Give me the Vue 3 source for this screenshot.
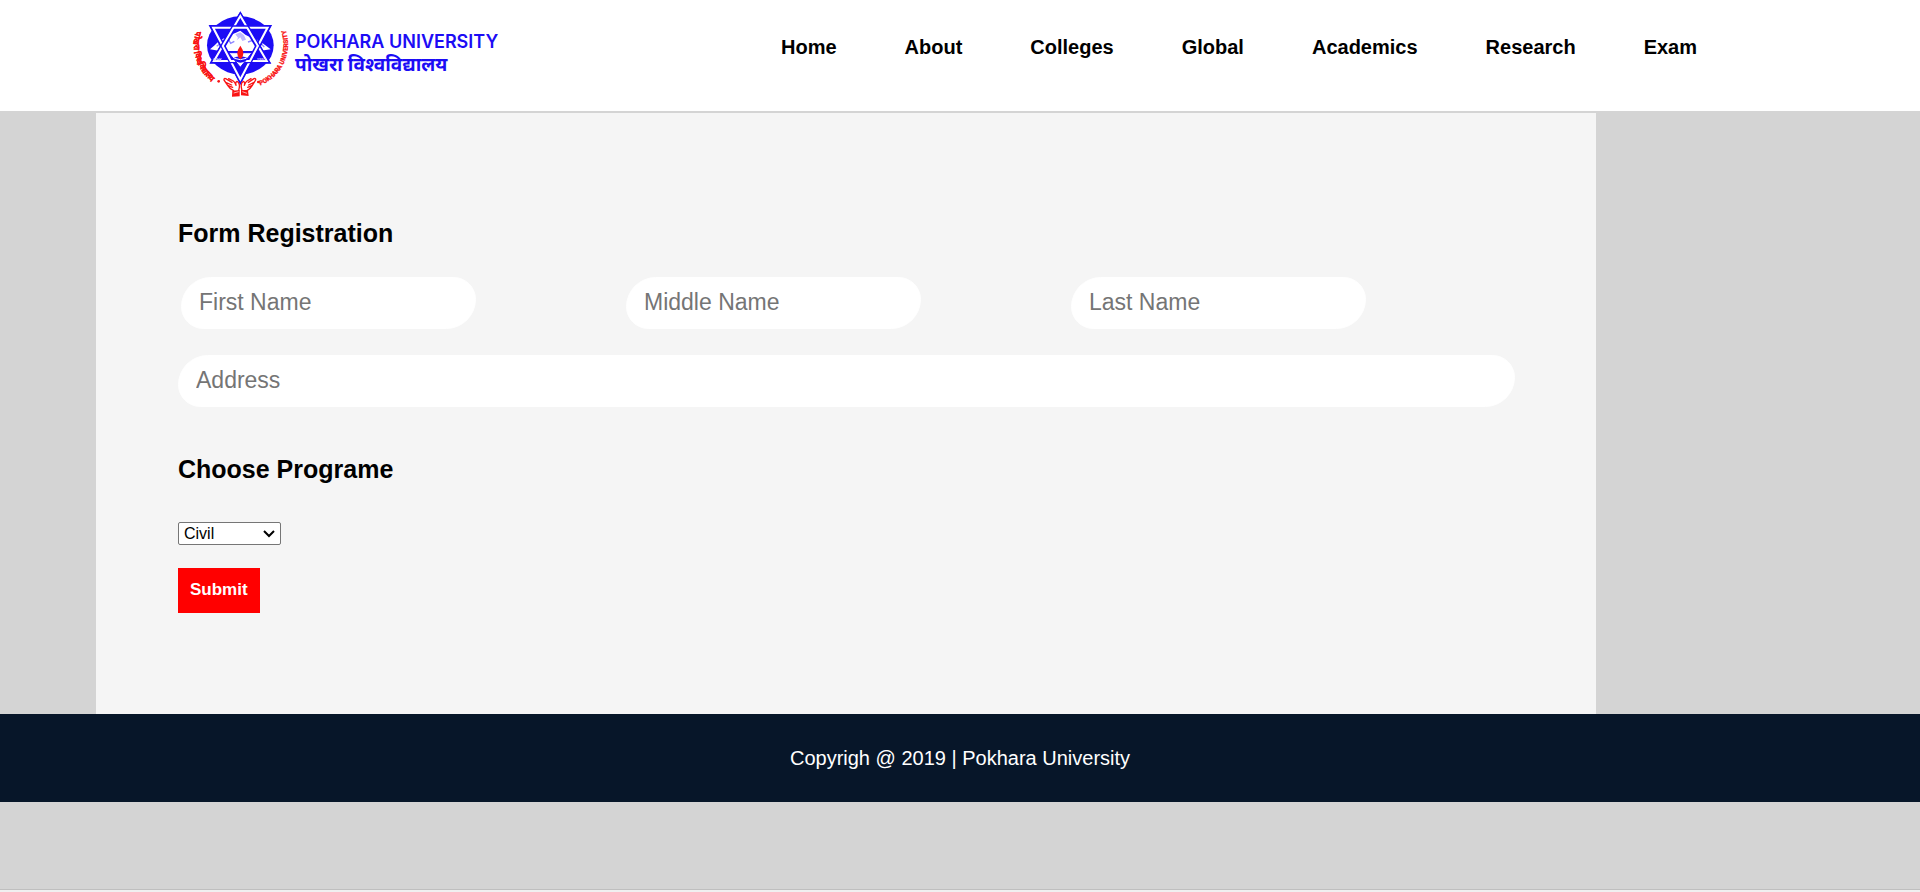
<script setup>
import { ref } from 'vue'

const links = ['Home', 'About', 'Colleges', 'Global', 'Academics', 'Research', 'Exam']
const names = ['First Name', 'Middle Name', 'Last Name']
const programes = ['Civil', 'Computer', 'Electrical', 'Software']
const programe = ref('Civil')
</script>

<template>
  <div class="page">
    <header class="header">
      <a class="brand" href="#" aria-label="Pokhara University">
        <svg class="emblem" viewBox="0 0 360 330" aria-hidden="true">
          <defs>
            <path id="arc-left" d="M48 93 A138 138 0 0 0 120 260" />
            <path id="arc-right" d="M241 256 A132 132 0 0 0 311 76" />
          </defs>
          <ellipse cx="181" cy="136" rx="100" ry="87" fill="#1c0cf5" />
          <path d="M90 148 L104 136 L118 122 L134 114 L150 105 L166 99 L181 92 L196 104 L211 112 L228 117 L246 128 L272 148 L238 153 L120 153 Z" fill="#fff" />
          <path d="M166 103 L174 113 L170 121 L181 112 L187 123 L198 119 L192 106 L181 97 Z" fill="#bdb8ff" />
          <path d="M110 139 L126 127 L134 134 L146 119 L152 130 L163 124 M204 126 L219 121 L231 135 L244 132 L253 141" fill="none" stroke="#8e86ff" stroke-width="4" />
          <g fill="none" stroke="#1c0cf5" stroke-width="16">
            <path d="M181 50 L102 183 H260 Z" />
            <path d="M181 238 L99 83 H263 Z" />
          </g>
          <g fill="none" stroke="#fff" stroke-width="8">
            <path d="M181 46 L100 184 H262 Z" />
            <path d="M181 240 L98 82 H264 Z" />
          </g>
          <g fill="none" stroke="#1c0cf5" stroke-width="4">
            <path d="M181 38 L93 188 H269 Z" />
            <path d="M181 249 L91 78 H271 Z" />
          </g>
          <path d="M146 158 H216 L181 202 Z" fill="#fff" stroke="#1c0cf5" stroke-width="3" />
          <path d="M160 174 Q181 164 202 174 Q196 188 181 188 Q166 188 160 174 Z" fill="#1c0cf5" />
          <path d="M163 175 Q181 183 199 175" fill="none" stroke="#fff" stroke-width="3" />
          <path d="M181 137 Q172 149 172 160 Q173 173 181 178 Q189 173 190 160 Q190 149 181 137 Z" fill="#f91414" />
          <g class="year" fill="#d9d6ff">
            <text x="99" y="184">२०५४</text>
            <text x="230" y="182">1997</text>
          </g>
          <g fill="#f91414">
            <circle cx="116" cy="244" r="4" />
            <circle cx="235" cy="246" r="4" />
            <path d="M157 272 L179 270 L179 289 L156 290 Z" />
            <path d="M183 270 L204 270 L206 288 L183 286 Z" />
          </g>
          <g fill="none" stroke="#f91414" stroke-width="4" stroke-linecap="round" stroke-linejoin="round">
            <path d="M161 272 Q148 265 143 256 L132 240 Q131 234 137 236 L156 247 M143 256 L158 262 M137 247 L155 255 M146 236 L160 243 Q165 246 168 256 M168 256 Q165 246 171 244 Q180 248 178 262 L176 272" />
            <path d="M201 272 Q212 265 217 256 L227 240 Q228 234 222 236 L205 247 M217 256 L203 262 M222 247 L206 255 M213 236 L201 243 Q196 246 193 256 M193 256 Q196 246 190 244 Q182 248 184 262 L186 272" />
          </g>
          <path d="M161 279 L176 275 M187 275 L201 280" fill="none" stroke="#fff" stroke-width="2" />
          <text class="ring ring-left"><textPath href="#arc-left">पोखरा विश्वविद्यालय</textPath></text>
          <text class="ring ring-right"><textPath href="#arc-right">POKHARA UNIVERSITY</textPath></text>
        </svg>
        <span class="brand-name">
          <span class="brand-en">POKHARA UNIVERSITY</span>
          <span class="brand-ne" lang="ne">पोखरा विश्वविद्यालय</span>
        </span>
      </a>
      <nav class="nav">
        <a v-for="link in links" :key="link" href="#">{{ link }}</a>
      </nav>
    </header>

    <main class="panel">
      <form @submit.prevent>
        <h2>Form Registration</h2>
        <div class="names">
          <div v-for="name in names" :key="name" class="name-cell">
            <input class="field" type="text" :placeholder="name" :aria-label="name" />
          </div>
        </div>
        <input class="field address" type="text" placeholder="Address" aria-label="Address" />
        <h2><label for="programe">Choose Programe</label></h2>
        <div class="select-wrap">
          <select id="programe" v-model="programe">
            <option v-for="p in programes" :key="p">{{ p }}</option>
          </select>
          <svg class="chevron" viewBox="0 0 12 8" aria-hidden="true">
            <path d="M1 1 L6 6 L11 1" fill="none" stroke="#000" stroke-width="2" />
          </svg>
        </div>
        <button type="submit">Submit</button>
      </form>
    </main>

    <footer class="footer">Copyrigh @ 2019 | Pokhara University</footer>
    <div class="baseline"></div>
  </div>
</template>

<style>
body {
  margin: 0;
  background: #d4d4d4;
}
</style>

<style scoped>
.page {
  display: flex;
  flex-direction: column;
  min-height: 100vh;
  font-family: "Liberation Sans", Arial, sans-serif;
  color: #000;
}
.header {
  display: flex;
  align-items: flex-start;
  justify-content: space-between;
  height: 111px;
  padding: 0 223px 0 180px;
  background: #fff;
  border-bottom: 2px solid #d4d4d4;
}
.brand {
  display: flex;
  color: #1c0cf5;
  text-decoration: none;
}
.emblem {
  width: 120px;
  height: 110px;
}
.brand-name {
  display: flex;
  flex-direction: column;
  margin: 31px 0 0 -5px;
  white-space: nowrap;
}
.brand-en {
  font: 600 18px/22px Inter, sans-serif;
}
.brand-ne {
  font: 700 19px/22px "Noto Sans", "Noto Sans Devanagari", sans-serif;
}
.year {
  font: 700 14px "Liberation Serif", serif;
}
.ring {
  fill: #f91414;
  stroke: #f91414;
  stroke-width: 1px;
  font-weight: 700;
}
.ring-left {
  font-size: 24px;
}
.ring-right {
  font-family: Roboto, sans-serif;
  font-size: 19px;
}
.nav {
  display: flex;
  gap: 68px;
  padding-top: 35px;
}
.nav a {
  color: #000;
  font-size: 20px;
  font-weight: 700;
  line-height: 24px;
  text-decoration: none;
}
.panel {
  box-sizing: border-box;
  width: calc(100% - 420px);
  min-height: 601px;
  margin-left: 5%;
  padding: 106px 81px 100px 82px;
  background: #f5f5f5;
}
h2 {
  margin: 0;
  font-size: 25px;
  line-height: 28px;
}
.names {
  display: grid;
  grid-template-columns: repeat(3, 1fr);
  margin: 30px 0 26px;
  padding-right: 2px;
}
.name-cell {
  padding: 0 3px;
}
.field {
  display: block;
  box-sizing: border-box;
  width: 295px;
  max-width: 100%;
  height: 52px;
  padding: 0 17px 2px;
  border: 1px solid #fff;
  border-radius: 40px 30px;
  background: #fff;
  font: 23px "Liberation Sans", Arial, sans-serif;
}
.field::placeholder {
  color: #757575;
}
.address {
  width: 100%;
  max-width: none;
  margin-bottom: 48px;
}
.select-wrap {
  position: relative;
  width: 103px;
  margin: 39px 0 23px;
}
select {
  display: block;
  appearance: none;
  box-sizing: border-box;
  width: 100%;
  height: 23px;
  margin: 0;
  padding: 0 20px 0 5px;
  border: 1px solid #767676;
  border-radius: 2px;
  background-color: #fff;
  color: #000;
  font: 16px "Liberation Sans", Arial, sans-serif;
}
.chevron {
  position: absolute;
  top: 8px;
  right: 6px;
  width: 12px;
  height: 8px;
  pointer-events: none;
}
button {
  display: block;
  height: 45px;
  padding: 0 12px 2px;
  border: 0;
  background: #f00;
  color: #fff;
  font: 700 17px "Liberation Sans", Arial, sans-serif;
}
.footer {
  background: #071629;
  color: #fff;
  font-size: 20px;
  line-height: 88px;
  text-align: center;
}
.baseline {
  height: 2px;
  margin-top: auto;
  border-top: 1px solid #bfbfbf;
  background: #f0f0f0;
}
</style>
